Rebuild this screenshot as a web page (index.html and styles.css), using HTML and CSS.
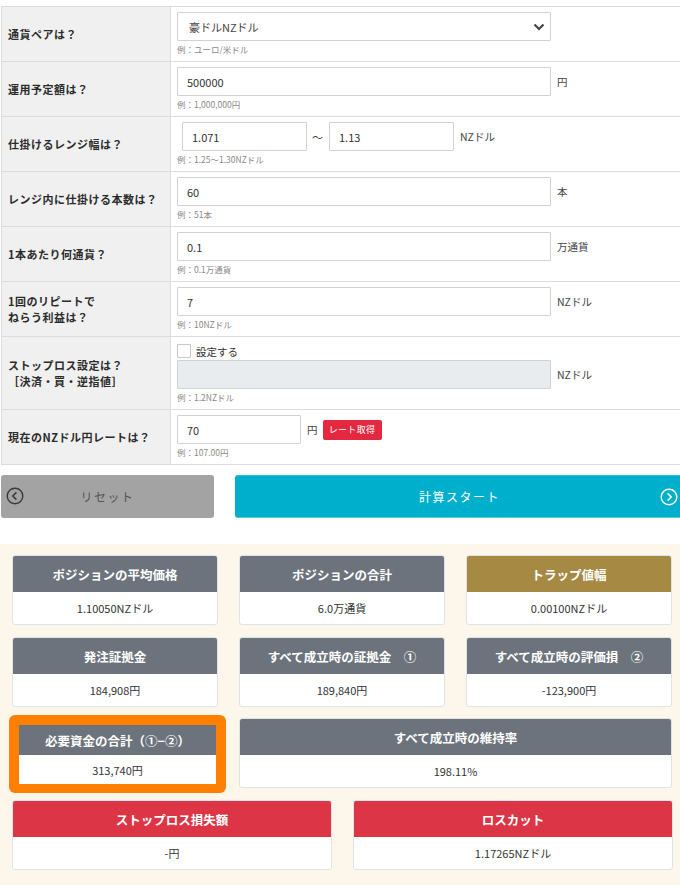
FILE: index.html
```html
<!DOCTYPE html>
<html lang="ja">
<head>
<meta charset="utf-8">
<title>トラップリピート計算</title>
<link rel="stylesheet" href="styles.css">
</head>
<body>
<div class="page">
  <div class="form">
    <div class="row">
      <div class="label">通貨ペアは？</div>
      <div class="field">
        <div class="line">
          <div class="select-wrap">
            <select class="control"><option>豪ドルNZドル</option></select>
            <svg class="chev" width="12" height="8" viewBox="0 0 12 8"><path d="M1.5 1.5 L6 6 L10.5 1.5" fill="none" stroke="#444" stroke-width="2.2"/></svg>
          </div>
        </div>
        <div class="hint">例：ユーロ/米ドル</div>
      </div>
    </div>
    <div class="row">
      <div class="label">運用予定額は？</div>
      <div class="field">
        <div class="line"><input class="control" value="500000"><span class="unit">円</span></div>
        <div class="hint">例：1,000,000円</div>
      </div>
    </div>
    <div class="row">
      <div class="label">仕掛けるレンジ幅は？</div>
      <div class="field">
        <div class="line"><input class="control range first" value="1.071"><span class="tilde">〜</span><input class="control range" value="1.13"><span class="unit">NZドル</span></div>
        <div class="hint">例：1.25〜1.30NZドル</div>
      </div>
    </div>
    <div class="row">
      <div class="label">レンジ内に仕掛ける本数は？</div>
      <div class="field">
        <div class="line"><input class="control" value="60"><span class="unit">本</span></div>
        <div class="hint">例：51本</div>
      </div>
    </div>
    <div class="row">
      <div class="label">1本あたり何通貨？</div>
      <div class="field">
        <div class="line"><input class="control" value="0.1"><span class="unit">万通貨</span></div>
        <div class="hint">例：0.1万通貨</div>
      </div>
    </div>
    <div class="row">
      <div class="label">1回のリピートで<br>ねらう利益は？</div>
      <div class="field">
        <div class="line"><input class="control" value="7"><span class="unit">NZドル</span></div>
        <div class="hint">例：10NZドル</div>
      </div>
    </div>
    <div class="row">
      <div class="label">ストップロス設定は？<br>［決済・買・逆指値］</div>
      <div class="field">
        <label class="check"><span class="box"></span>設定する</label>
        <div class="line"><input class="control" disabled value=""><span class="unit">NZドル</span></div>
        <div class="hint">例：1.2NZドル</div>
      </div>
    </div>
    <div class="row">
      <div class="label">現在のNZドル円レートは？</div>
      <div class="field">
        <div class="line"><input class="control rate-input" value="70"><span class="unit yen">円</span><button class="rate">レート取得</button></div>
        <div class="hint">例：107.00円</div>
      </div>
    </div>
  </div>

  <div class="actions">
    <button class="btn reset">
      <svg class="ico left" width="18" height="18" viewBox="0 0 18 18"><circle cx="9" cy="9" r="7.8" fill="none" stroke="#3a3a3a" stroke-width="1.4"/><path d="M10.4 5.4 L6.8 9 L10.4 12.6" fill="none" stroke="#3a3a3a" stroke-width="1.5"/></svg>
      <span>リセット</span>
    </button>
    <button class="btn calc">
      <span>計算スタート</span>
      <svg class="ico right" width="18" height="18" viewBox="0 0 18 18"><circle cx="9" cy="9" r="7.8" fill="none" stroke="#fff" stroke-width="1.4"/><path d="M7.6 5.4 L11.2 9 L7.6 12.6" fill="none" stroke="#fff" stroke-width="1.5"/></svg>
    </button>
  </div>

  <div class="results">
    <div class="grid3">
      <div class="card"><div class="head">ポジションの平均価格</div><div class="body">1.10050NZドル</div></div>
      <div class="card"><div class="head">ポジションの合計</div><div class="body">6.0万通貨</div></div>
      <div class="card"><div class="head gold">トラップ値幅</div><div class="body">0.00100NZドル</div></div>
      <div class="card"><div class="head">発注証拠金</div><div class="body">184,908円</div></div>
      <div class="card"><div class="head">すべて成立時の証拠金　①</div><div class="body">189,840円</div></div>
      <div class="card"><div class="head">すべて成立時の評価損　②</div><div class="body">-123,900円</div></div>
      <div class="highlight">
        <div class="hl-inner"><div class="head hl-head">必要資金の合計（①−②）</div><div class="body hl-body">313,740円</div></div>
      </div>
      <div class="card wide"><div class="head">すべて成立時の維持率</div><div class="body">198.11%</div></div>
    </div>
    <div class="grid2">
      <div class="card"><div class="head red">ストップロス損失額</div><div class="body">-円</div></div>
      <div class="card"><div class="head red">ロスカット</div><div class="body">1.17265NZドル</div></div>
    </div>
  </div>
</div>
</body>
</html>
```

FILE: styles.css
```css
html, body {
  margin: 0;
  padding: 0;
  overflow: hidden;
  background: #fff;
}
body {
  font-family: "Noto Sans CJK JP", "Noto Sans", sans-serif;
  color: #333;
}
.page {
  width: 684px;
  padding-top: 6px;
}
.form {
  margin-left: 1px;
  border-top: 1px solid #dcdcdc;
  border-left: 1px solid #dcdcdc;
}
.row {
  display: grid;
  grid-template-columns: 169px 1fr;
  border-bottom: 1px solid #dcdcdc;
}
.label {
  background: #f0f0f0;
  border-right: 1px solid #dcdcdc;
  display: flex;
  align-items: center;
  padding-left: 6px;
  font-size: 11px;
  font-weight: bold;
  letter-spacing: 0.5px;
  line-height: 16.5px;
  color: #2b2b2b;
}
.field {
  padding: 5px 6px 5px 6px;
  min-width: 0;
}
.line {
  display: flex;
  align-items: center;
  height: 29px;
}
.control {
  box-sizing: border-box;
  width: 374px;
  height: 29px;
  border: 1px solid #cfd2d6;
  border-radius: 1px;
  background: #fff;
  padding: 0 9px;
  font-family: "Noto Sans CJK JP", "Noto Sans", sans-serif;
  font-size: 11px;
  color: #333;
  margin: 0;
  outline: none;
}
.control:disabled {
  background: #e9ecef;
}
select.control {
  appearance: none;
  -webkit-appearance: none;
  padding-left: 11px;
  color: #444;
}
.select-wrap {
  position: relative;
  display: flex;
}
.chev {
  position: absolute;
  right: 6px;
  top: 11px;
}
.range {
  width: 125px;
}
.range.first {
  margin-left: 5px;
}
.tilde {
  font-size: 11px;
  margin: 0 6px 0 5px;
  color: #444;
}
.rate-input {
  width: 124px;
}
.unit {
  margin-left: 6px;
  font-size: 10.5px;
  color: #444;
}
.unit.yen {
  margin-right: 5px;
}
.rate {
  height: 20px;
  width: 59px;
  padding: 0;
  border: none;
  border-radius: 2px;
  background: #e4283f;
  color: #fff;
  font-family: "Noto Sans CJK JP", sans-serif;
  font-size: 9px;
  letter-spacing: 0.3px;
}
.hint {
  margin-top: 2px;
  height: 13px;
  line-height: 13px;
  font-size: 8.5px;
  color: #8a8a8a;
}
.check {
  display: flex;
  align-items: center;
  height: 16px;
  margin-top: 1px;
  margin-bottom: 1px;
  font-size: 10.5px;
  color: #333;
}
.box {
  box-sizing: border-box;
  width: 14px;
  height: 14px;
  border: 1px solid #c8c8c8;
  border-radius: 1px;
  background: #fff;
  margin-right: 5px;
}

.actions {
  display: flex;
  gap: 21px;
  margin-top: 10px;
  padding-left: 1px;
}
.btn {
  box-sizing: border-box;
  height: 43px;
  border: none;
  border-radius: 3px;
  display: flex;
  align-items: center;
  justify-content: center;
  position: relative;
  font-family: "Noto Sans CJK JP", sans-serif;
  font-size: 12px;
  letter-spacing: 1.5px;
  padding: 0;
}
.reset {
  width: 213px;
  background: #a3a3a3;
  color: #555;
}
.calc {
  flex: 1;
  background: #00afcb;
  color: #fff;
  border-top: 1px solid #2bbfd6;
  border-bottom: 1px solid #5fc8d8;
}
.ico {
  position: absolute;
  top: 12px;
}
.ico.left {
  left: 5px;
}
.ico.right {
  right: 6px;
}

.results {
  margin-top: 26px;
  background: #fdf6ea;
  padding: 11px 0 20px 12px;
}
.grid3 {
  display: grid;
  grid-template-columns: 206px 206px 206px;
  column-gap: 21px;
  row-gap: 12px;
}
.grid2 {
  display: grid;
  grid-template-columns: 320px 320px;
  column-gap: 21px;
  margin-top: 12px;
}
.card {
  box-sizing: border-box;
  border: 1px solid #dfe2e6;
  border-radius: 3px;
  background: #fff;
  overflow: hidden;
}
.head {
  height: 36px;
  background: #6c737c;
  color: #fff;
  font-weight: bold;
  font-size: 12.5px;
  white-space: nowrap;
  display: flex;
  align-items: center;
  justify-content: center;
}
.head.gold {
  background: #a68a43;
}
.head.red {
  background: #dc3545;
}
.body {
  height: 32px;
  display: flex;
  align-items: center;
  justify-content: center;
  font-size: 11px;
  color: #333;
}
.card.wide {
  grid-column: 2 / 4;
  margin-top: -1px;
}
.highlight {
  box-sizing: border-box;
  width: 217px;
  height: 78px;
  padding: 10px;
  background: #ff8000;
  border-radius: 6px;
  margin: -4px 0 -8px -3px;
  align-self: start;
}
.hl-inner {
  background: #fff;
  width: 197px;
}
.hl-head {
  height: 30px;
}
.hl-body {
  height: 29px;
}
```
